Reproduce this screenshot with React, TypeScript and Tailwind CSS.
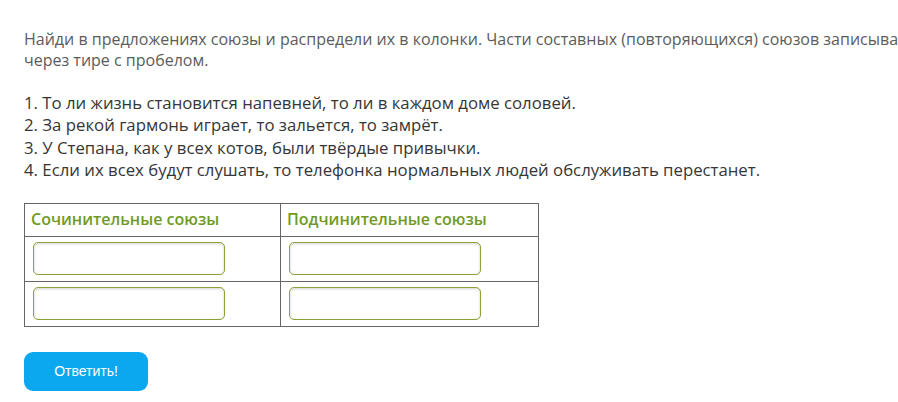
export default function App() {
  const sentences = [
    '1. То ли жизнь становится напевней, то ли в каждом доме соловей.',
    '2. За рекой гармонь играет, то зальется, то замрёт.',
    '3. У Степана, как у всех котов, были твёрдые привычки.',
    '4. Если их всех будут слушать, то телефонка нормальных людей обслуживать перестанет.',
  ];

  const inputCls =
    'block w-[192px] h-[33px] rounded-[5px] border border-[#8aa33a] bg-white shadow-[inset_0_1px_3px_rgba(0,0,0,0.18)] outline-none';

  return (
    <div className="w-[898px] h-[402px] overflow-hidden bg-white pl-6 pt-[29px] font-['Open_Sans',sans-serif] text-[16px] text-[#5c5c5c] leading-[21px]">
      {/* Task text */}
      <p className="whitespace-nowrap">
        Найди в предложениях союзы и распредели их в колонки. Части составных (повторяющихся) союзов записывай
      </p>
      <p>через тире с пробелом.</p>

      <div className="mt-[21px] leading-[22.4px] text-[16.75px] text-[#363636]">
        {sentences.map((s) => (
          <p key={s}>{s}</p>
        ))}
      </div>

      {/* Answer table */}
      <table className="mt-[21px] border-collapse">
        <thead>
          <tr className="h-[33px]">
            <th className="w-[256px] border border-[#666] px-[6px] text-left font-semibold text-[#6f9a26]">
              Сочинительные союзы
            </th>
            <th className="w-[258px] border border-[#666] px-[6px] text-left font-semibold text-[#6f9a26]">
              Подчинительные союзы
            </th>
          </tr>
        </thead>
        <tbody>
          {[0, 1].map((r) => (
            <tr key={r} className="h-[45px]">
              <td className="border border-[#666] px-2 py-0 align-middle">
                <input className={inputCls} />
              </td>
              <td className="border border-[#666] px-2 py-0 align-middle">
                <input className={inputCls} />
              </td>
            </tr>
          ))}
        </tbody>
      </table>

      <button className="block mt-[25px] w-[124px] h-[39px] rounded-[9px] bg-[#0ba8ef] text-white text-[14px] font-['Liberation_Sans',Arial,sans-serif]">
        Ответить!
      </button>
    </div>
  );
}
